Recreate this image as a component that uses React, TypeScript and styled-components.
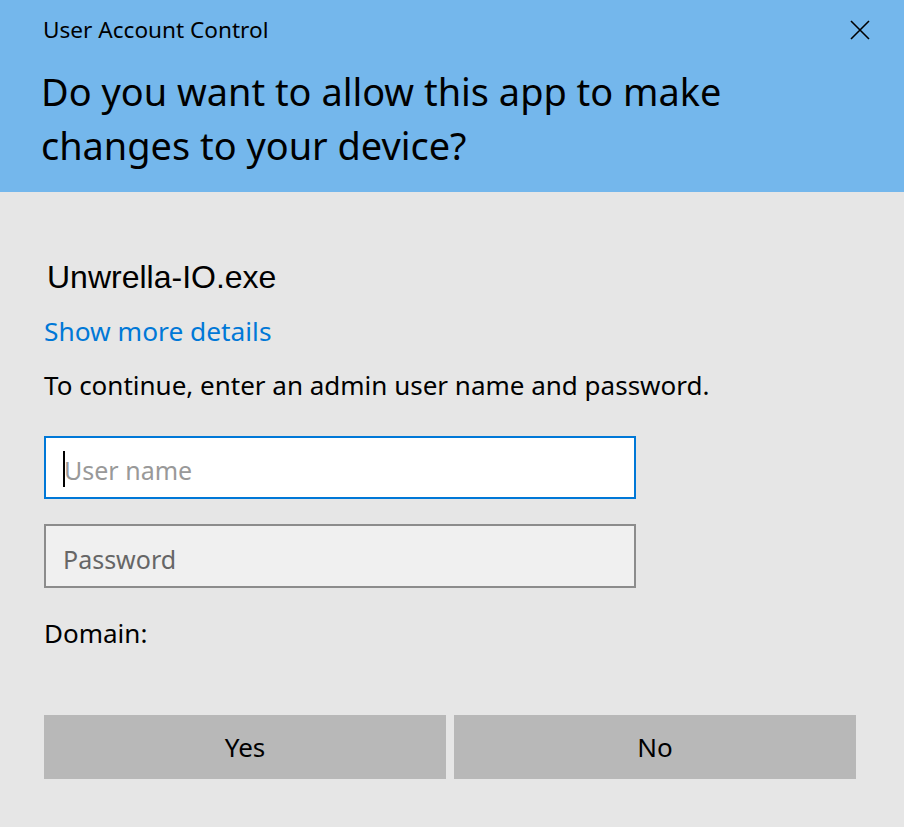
import React from "react";
import styled, { createGlobalStyle } from "styled-components";

const Global = createGlobalStyle`
  html, body { margin: 0; padding: 0; }
  body {
    background: #e6e6e6;
    font-family: "Noto Sans", "Open Sans", sans-serif;
    color: #000;
  }
`;

const Dialog = styled.div`
  width: 904px;
  height: 827px;
  display: flex;
  flex-direction: column;
  background: #e6e6e6;
  overflow: hidden;
`;

const Header = styled.header`
  background: #74b7ec;
  height: 192px;
  box-sizing: border-box;
  padding: 14px 0 0 41px;
  display: flex;
  flex-direction: column;
`;

const CaptionRow = styled.div`
  display: flex;
  align-items: center;
  justify-content: space-between;
  height: 32px;
  padding-right: 34px;
  padding-left: 2px;
`;

const Caption = styled.span`
  font-size: 22.6px;
  line-height: 32px;
`;

const Close = styled.svg`
  width: 20px;
  height: 20px;
  display: block;
`;

const Title = styled.h1`
  margin: 18px 0 0 0;
  font-weight: 400;
  font-size: 37.9px;
  line-height: 54px;
`;

const Body = styled.main`
  display: flex;
  flex-direction: column;
  padding: 0 48px 0 44px;
`;

const AppName = styled.div`
  margin-top: 65px;
  margin-left: 3px;
  font-family: "Liberation Sans", Arial, sans-serif;
  font-size: 32px;
  line-height: 40px;
`;

const Link = styled.a`
  margin-top: 14px;
  color: #0078d7;
  font-size: 26.3px;
  line-height: 40px;
  text-decoration: none;
  align-self: flex-start;
`;

const Instruction = styled.p`
  margin: 14px 0 0 0;
  font-size: 26px;
  line-height: 40px;
`;

const Field = styled.div<{ $focused?: boolean }>`
  width: 592px;
  height: ${(p) => (p.$focused ? "63px" : "64px")};
  box-sizing: border-box;
  border: 2px solid ${(p) => (p.$focused ? "#0078d7" : "#8c8c8c")};
  background: ${(p) => (p.$focused ? "#ffffff" : "#f0f0f0")};
  display: flex;
  align-items: center;
  padding: 5px 0 0 17px;
  margin-top: ${(p) => (p.$focused ? "31px" : "25px")};
`;

const Caret = styled.span`
  width: 2px;
  height: 36px;
  background: #000;
  margin: -3px -1px 0 0;
`;

const Placeholder = styled.span<{ $dim?: boolean }>`
  font-size: 25px;
  color: ${(p) => (p.$dim ? "#999999" : "#666666")};
`;

const Domain = styled.div`
  margin-top: 25px;
  font-size: 26px;
  line-height: 40px;
`;

const Buttons = styled.div`
  margin-top: 62px;
  display: grid;
  grid-template-columns: 402px 402px;
  column-gap: 8px;
`;

const Button = styled.button`
  height: 64px;
  border: none;
  background: #b8b8b8;
  font-family: "Noto Sans", "Open Sans", sans-serif;
  font-size: 26px;
  color: #000;
  padding: 0;
`;

export default function App() {
  return (
    <>
      <Global />
      <Dialog>
        <Header>
          <CaptionRow>
            <Caption>User Account Control</Caption>
            <Close viewBox="0 0 20 20">
              <path d="M1 1 L19 19 M19 1 L1 19" stroke="#000" strokeWidth="1.6" fill="none" />
            </Close>
          </CaptionRow>
          <Title>
            Do you want to allow this app to make
            <br />
            changes to your device?
          </Title>
        </Header>
        <Body>
          <AppName>Unwrella-IO.exe</AppName>
          <Link href="#">Show more details</Link>
          <Instruction>To continue, enter an admin user name and password.</Instruction>
          <Field $focused>
            <Caret />
            <Placeholder $dim>User name</Placeholder>
          </Field>
          <Field>
            <Placeholder>Password</Placeholder>
          </Field>
          <Domain>Domain:</Domain>
          <Buttons>
            <Button>Yes</Button>
            <Button>No</Button>
          </Buttons>
        </Body>
      </Dialog>
    </>
  );
}
